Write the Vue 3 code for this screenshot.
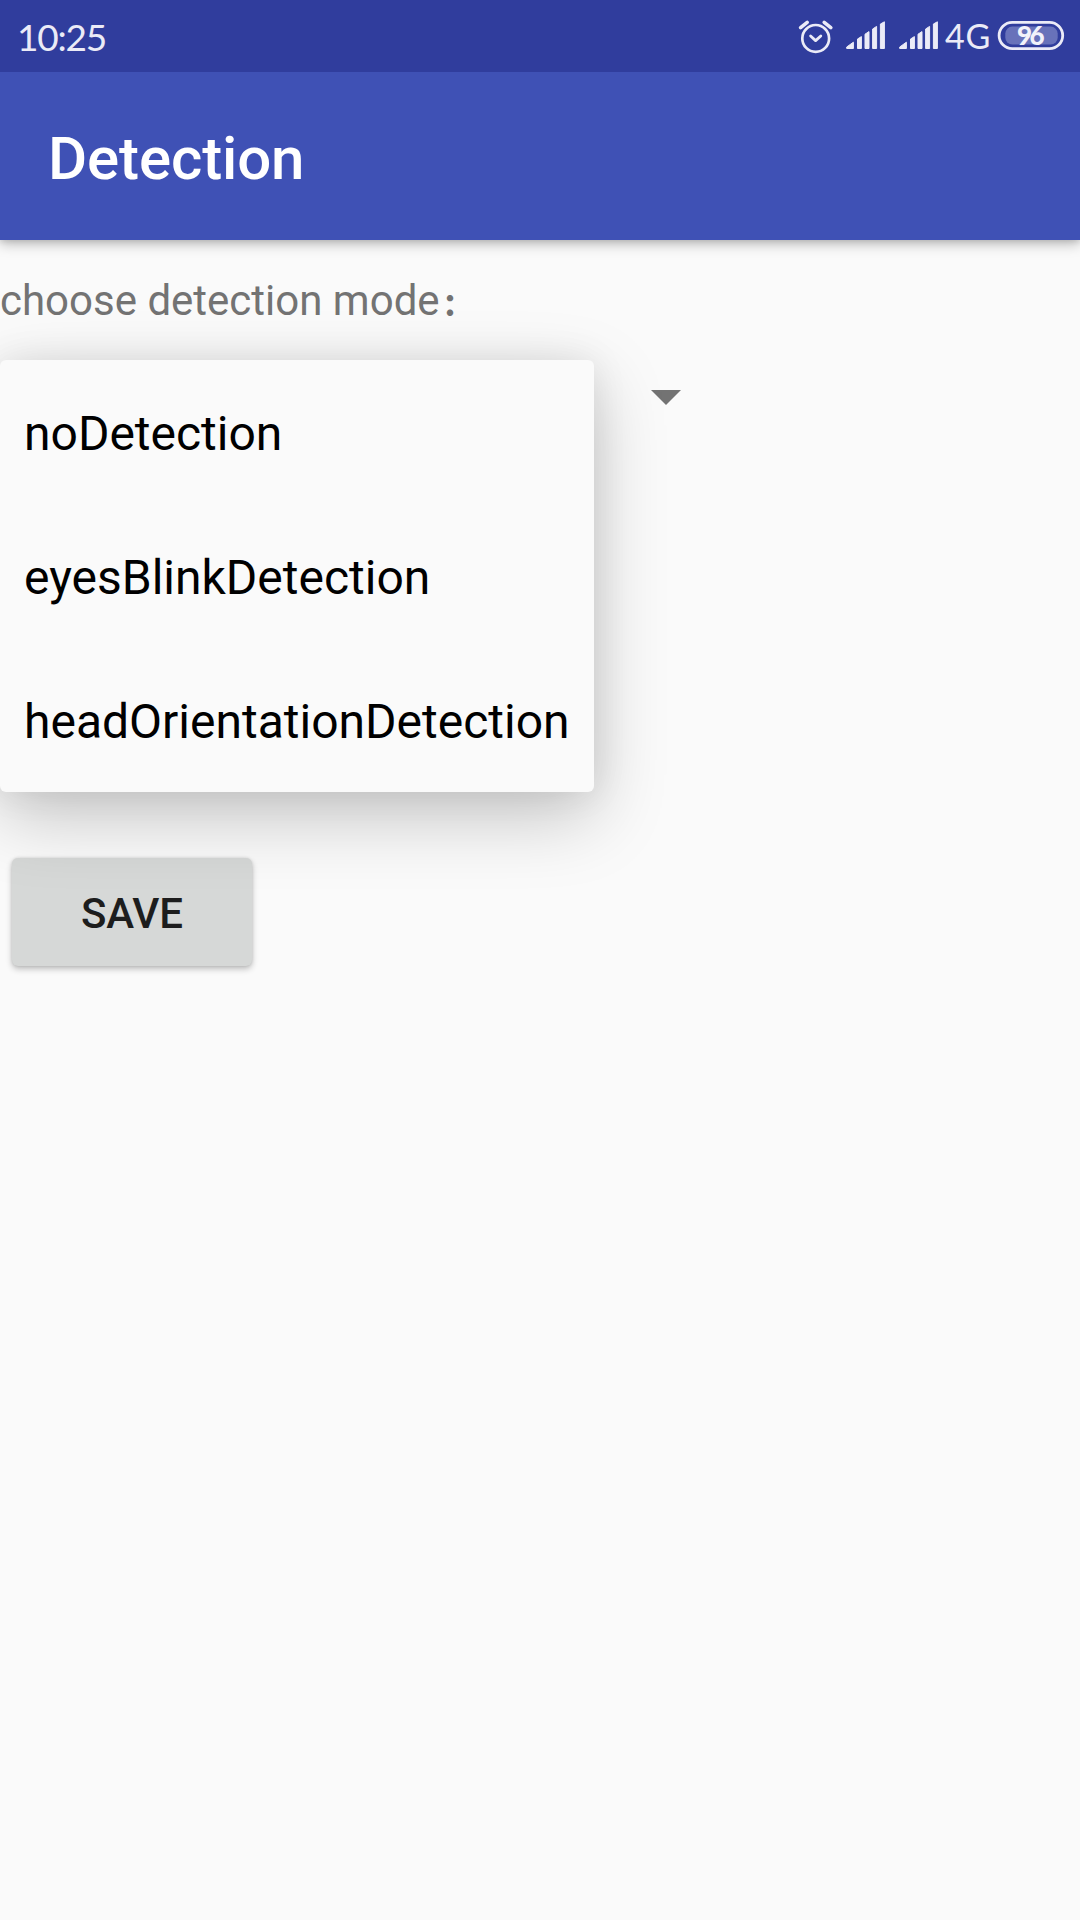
<script setup>
const modes = ['noDetection', 'eyesBlinkDetection', 'headOrientationDetection']
</script>

<template>
  <div class="screen">
    <div class="status">
      <span class="clock">10:25</span>
      <div class="tray">
        <svg class="alarm" width="36" height="72" viewBox="798 0 36 72" fill="none" stroke="#ebebf7">
          <circle cx="815.7" cy="38.4" r="13.4" stroke-width="2.7" />
          <path d="M800.6 27.6 L807.2 22.4 M824.2 22.4 L830.8 27.6" stroke-width="3.6" stroke-linecap="round" />
          <path d="M810.6 36 L815.6 40.6 L820.8 36" stroke-width="2.8" stroke-linecap="round" stroke-linejoin="round" />
        </svg>
        <svg v-for="n in 2" :key="n" class="signal" width="39" height="72" viewBox="0 0 39 72" fill="#ebebf7" stroke="#ebebf7" stroke-width="1" stroke-linejoin="round">
          <path d="M.7 47 L7.4 42.2 V48.5 H.7 Z M11.5 39 L15.4 36.6 V48.5 H11.5 Z M19 34.2 L23 31.6 V48.5 H19 Z M26.6 29 L30.6 26.4 V48.5 H26.6 Z M34.4 24 L38.4 21.8 V48.5 H34.4 Z" />
        </svg>
        <span class="network">4G</span>
        <svg class="battery" width="68" height="72" viewBox="997 0 68 72">
          <rect x="999.1" y="22.3" width="63.6" height="26.4" rx="13.2" fill="none" stroke="#ebebf7" stroke-width="2.8" />
          <rect x="1005.3" y="26.6" width="52.4" height="18" rx="7" fill="#6872ba" />
          <text x="1029.6" y="45" text-anchor="middle" class="level">96</text>
        </svg>
      </div>
    </div>
    <header class="bar"><h1>Detection</h1></header>
    <main>
      <div class="label">choose detection mode<span class="colon">：</span></div>
      <div class="spinner">
        <svg class="arrow" width="30" height="15" viewBox="0 0 30 15"><path d="M0 0 H30 L15 15 Z" fill="#737373" /></svg>
        <ul class="popup">
          <li v-for="mode in modes" :key="mode">{{ mode }}</li>
        </ul>
      </div>
      <button class="save">SAVE</button>
    </main>
  </div>
</template>

<style>
body { margin: 0; background: #fafafa; }
</style>

<style scoped>
.screen {
  width: 1080px;
  height: 1920px;
  overflow: hidden;
  background: #fafafa;
  font-family: Roboto, "Noto Sans CJK SC", sans-serif;
}
.status {
  position: relative;
  z-index: 1;
  display: flex;
  justify-content: space-between;
  height: 72px;
  background: #303d9d;
  color: #ebebf7;
  font-family: Lato, sans-serif;
}
.clock {
  padding-left: 17px;
  font-size: 37px;
  line-height: 73px;
  letter-spacing: -1.2px;
}
.tray {
  display: flex;
  padding-right: 15px;
}
.tray svg { display: block; flex: none; }
.signal { margin-left: 14px; }
.alarm + .signal { margin-left: 12px; }
.network {
  width: 59px;
  box-sizing: border-box;
  padding-left: 7px;
  font-size: 34px;
  line-height: 71px;
  letter-spacing: 0.8px;
  white-space: nowrap;
}
.level {
  font: 900 26px Lato, sans-serif;
  letter-spacing: -2.4px;
  fill: #f2f2fa;
}
.bar {
  position: relative;
  display: flex;
  align-items: center;
  height: 168px;
  padding-left: 48px;
  background: #3f51b5;
  box-shadow: 0 4px 12px rgba(0, 0, 0, 0.26), 0 2px 5px rgba(0, 0, 0, 0.08);
}
h1 {
  margin: 6px 0 0;
  color: #fff;
  font-size: 60px;
  font-weight: 500;
  line-height: 70px;
  letter-spacing: -0.12px;
}
main {
  display: flex;
  flex-direction: column;
  align-items: flex-start;
  padding-top: 31px;
}
.label {
  height: 59px;
  color: #737373;
  font-size: 42px;
  line-height: 60px;
  white-space: nowrap;
}
.colon {
  margin-left: 3px;
  font-family: "Noto Sans CJK SC", sans-serif;
  font-size: 30px;
  font-weight: 900;
  line-height: 1;
}
.spinner {
  position: relative;
  display: flex;
  justify-content: flex-end;
  box-sizing: border-box;
  width: 681px;
  height: 528px;
  padding-top: 60px;
}
.popup {
  position: absolute;
  top: 30px;
  left: 0;
  z-index: 2;
  width: 594px;
  margin: 0;
  padding: 0;
  list-style: none;
  background: #fafafa;
  border-radius: 6px;
  box-shadow: 0 24px 72px rgba(0, 0, 0, 0.22), 0 0 36px rgba(0, 0, 0, 0.08);
}
.popup li {
  height: 144px;
  padding-left: 24px;
  color: #000;
  font-size: 48px;
  line-height: 148px;
}
.save {
  width: 240px;
  height: 108px;
  margin-left: 12px;
  padding: 3px 0 0;
  border: 0;
  border-radius: 6px;
  background: #d6d8d7;
  box-shadow: 0 3px 6px rgba(0, 0, 0, 0.24), 0 0 3px rgba(0, 0, 0, 0.12);
  color: #1d1d1d;
  font: 500 42px/105px Roboto, sans-serif;
  letter-spacing: -0.15px;
}
</style>
